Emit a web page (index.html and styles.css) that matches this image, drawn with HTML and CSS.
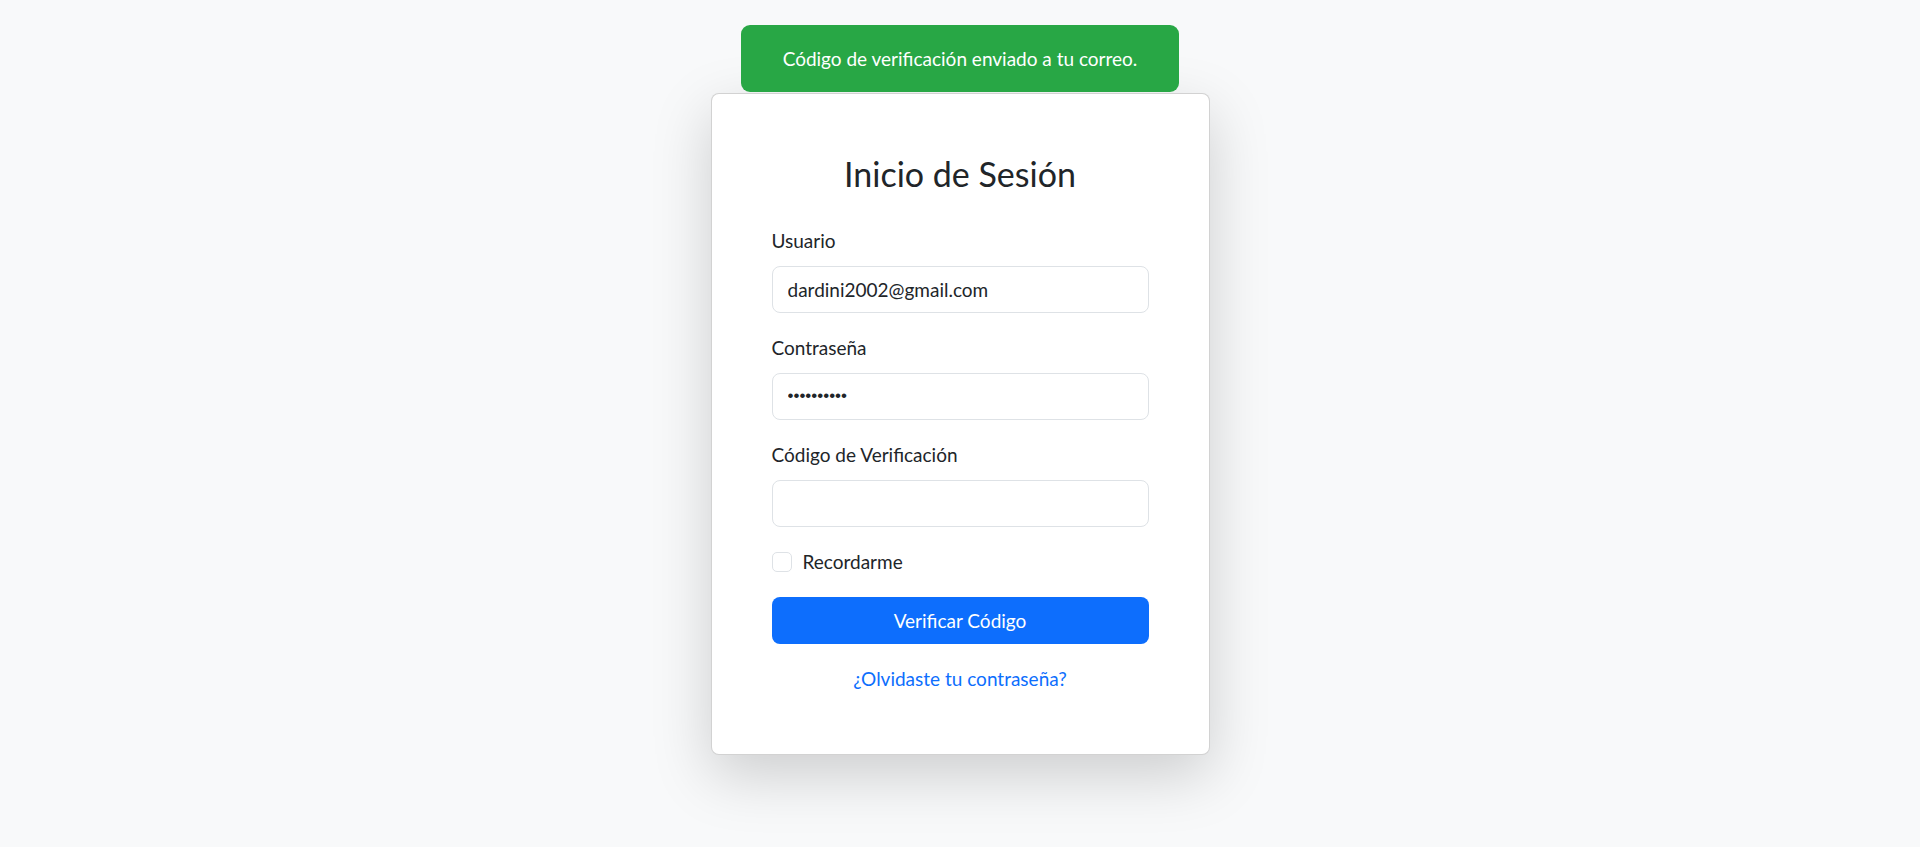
FILE: index.html
```html
<!DOCTYPE html>
<html lang="es">
<head>
<meta charset="utf-8">
<title>Inicio de Sesión</title>
<link rel="stylesheet" href="styles.css">
</head>
<body>
<div class="toast">Código de verificación enviado a tu correo.</div>
<main class="page">
  <section class="card">
    <h3 class="title">Inicio de Sesión</h3>
    <form class="form">
      <div class="group">
        <label class="label" for="u">Usuario</label>
        <input class="input" id="u" type="text" value="dardini2002@gmail.com">
      </div>
      <div class="group">
        <label class="label" for="p">Contraseña</label>
        <input class="input input-pass" id="p" type="password" value="dardini202">
      </div>
      <div class="group">
        <label class="label" for="c">Código de Verificación</label>
        <input class="input" id="c" type="text" value="">
      </div>
      <div class="check">
        <span class="box"></span>
        <span class="check-label">Recordarme</span>
      </div>
      <button class="btn" type="button">Verificar Código</button>
      <div class="link-row"><a class="link" href="#">¿Olvidaste tu contraseña?</a></div>
    </form>
  </section>
</main>
</body>
</html>
```

FILE: styles.css
```css
* { box-sizing: border-box; }
html, body { margin: 0; padding: 0; }
body {
  background: #f8f9fa;
  font-family: Lato, "Liberation Sans", sans-serif;
  color: #212529;
  font-size: 19px;
}
.page {
  min-height: 100vh;
  display: flex;
  align-items: center;
  justify-content: center;
}
.toast {
  position: absolute;
  top: 25px;
  left: 50%;
  transform: translateX(-50%);
  width: 438px;
  height: 67px;
  background: #28a745;
  color: #fff;
  border-radius: 9px;
  display: flex;
  align-items: center;
  justify-content: center;
  font-size: 19px;
  z-index: 2;
}
.card {
  width: 499px;
  background: #fff;
  border: 1px solid rgba(0,0,0,.175);
  border-radius: 8px;
  padding: 60px 60px;
  box-shadow: 0 20px 60px rgba(0,0,0,.175);
}
.title {
  margin: -1px 0 31px;
  font-size: 34px;
  font-weight: 400;
  line-height: 42px;
  text-align: center;
}
.form { display: flex; flex-direction: column; }
.group { display: flex; flex-direction: column; margin-bottom: 20px; }
.label { line-height: 30px; margin-bottom: 10px; }
.input {
  height: 47px;
  border: 1px solid #dee2e6;
  border-radius: 8px;
  padding: 0 15px;
  font-family: inherit;
  font-size: 19px;
  color: #212529;
  background: #fff;
  outline: none;
}
.input-pass {
  font-family: "Liberation Sans", sans-serif;
  font-size: 17px;
}
.check {
  display: flex;
  align-items: center;
  height: 30px;
  margin-bottom: 20px;
}
.box {
  width: 20px;
  height: 20px;
  border: 1px solid #dee2e6;
  border-radius: 5px;
  margin-right: 11px;
}
.check-label { line-height: 30px; }
.btn {
  height: 47px;
  border: 0;
  border-radius: 8px;
  background: #0d6efd;
  color: #fff;
  font-family: inherit;
  font-size: 19px;
}
.link-row { text-align: center; margin-top: 20px; line-height: 30px; }
.link { color: #0d6efd; text-decoration: none; }
```
